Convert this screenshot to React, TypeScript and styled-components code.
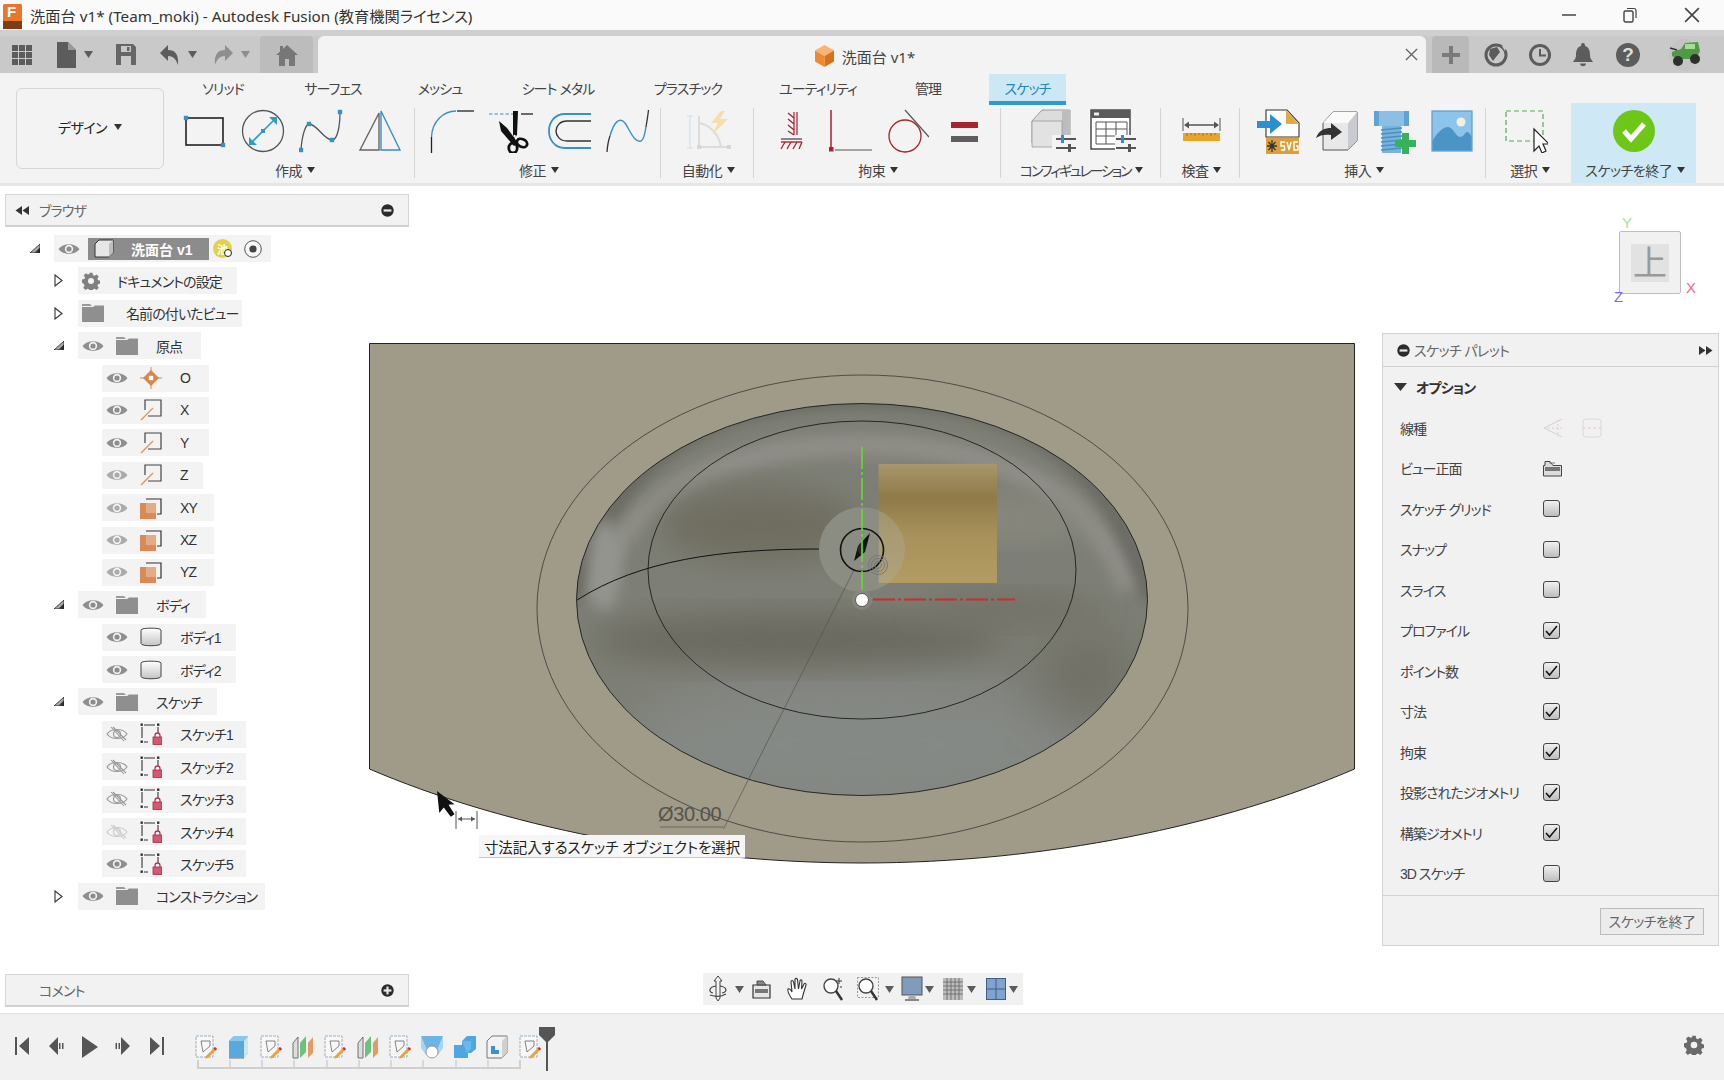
import React from "react";
import styled, { createGlobalStyle } from "styled-components";

const GlobalStyle = createGlobalStyle`
  html, body { margin: 0; padding: 0; background: #fff; overflow: hidden; }
  * { box-sizing: border-box; }
  body {
    font-family: "Liberation Sans", "Noto Sans CJK JP", sans-serif;
    font-feature-settings: "palt";
    color: #333;
  }
`;

const Page = styled.div`
  width: 1724px;
  height: 1080px;
  display: flex;
  flex-direction: column;
`;

/* ---------- title bar ---------- */
const TitleBar = styled.div`
  height: 30px;
  flex: none;
  background: #fafafa;
  display: flex;
  align-items: center;
  padding-left: 3px;
`;
const TitleText = styled.span`
  margin-left: 8px;
  font-family: "Noto Sans", "Noto Sans CJK JP", sans-serif;
  font-size: 15.25px;
  color: #333;
`;
const WindowButtons = styled.div`
  margin-left: auto;
  display: flex;
  align-items: center;
  gap: 47px;
  padding-right: 24px;
`;

/* ---------- tab bar ---------- */
const TabBar = styled.div`
  height: 43px;
  flex: none;
  padding-top: 6px;
  background: linear-gradient(#cfcfcf 0 6px, #c9c9c9 6px);
  display: flex;
`;
const Qat = styled.div`
  width: 260px;
  flex: none;
  display: flex;
  align-items: center;
  padding-left: 12px;
`;
const QatItem = styled.div<{ $ml?: number }>`
  display: flex;
  margin-left: ${(p) => p.$ml ?? 0}px;
`;
const HomeTab = styled.div`
  width: 53px;
  flex: none;
  margin-right: 5px;
  background: #bcbcbc;
  border-radius: 4px 4px 0 0;
  display: flex;
  align-items: center;
  justify-content: center;
`;
const DocTab = styled.div`
  width: 1108px;
  flex: none;
  background: #f3f3f3;
  border-radius: 6px 6px 0 0;
  display: grid;
  grid-template-columns: 1fr auto 1fr;
  align-items: center;
`;
const DocTitle = styled.div`
  grid-column: 2;
  display: flex;
  align-items: center;
  gap: 8px;
  padding: 3px 14px 0 0;
  font-family: "Noto Sans", "Noto Sans CJK JP", sans-serif;
  font-size: 15px;
  color: #444;
`;
const DocClose = styled.div`
  grid-column: 3;
  justify-self: end;
  display: flex;
  margin-right: 8px;
`;
const PlusTab = styled.div`
  width: 37px;
  flex: none;
  margin-left: 6px;
  background: #b9b9b9;
  border-radius: 4px 4px 0 0;
  display: flex;
  align-items: center;
  justify-content: center;
`;
const TopRight = styled.div`
  display: flex;
  align-items: center;
  padding-left: 15px;
`;

/* ---------- ribbon ---------- */
const Ribbon = styled.div`
  height: 113px;
  flex: none;
  background: #f3f3f3;
  border-bottom: 3px solid #e6e6e6;
  display: flex;
`;
const DesignColumn = styled.div`
  width: 173px;
  flex: none;
  padding: 15px 0 0 16px;
`;
const DesignButton = styled.div`
  width: 148px;
  height: 81px;
  border: 1px solid #d6d6d6;
  border-radius: 6px;
  display: flex;
  align-items: center;
  justify-content: center;
  gap: 7px;
  padding-bottom: 3px;
  font-size: 14px;
  letter-spacing: -0.6px;
  color: #222;
`;
const RibbonMain = styled.div`
  display: flex;
  flex-direction: column;
`;
const TabsRow = styled.div`
  height: 32px;
  flex: none;
  display: flex;
  padding-top: 1px;
`;
const RibbonTab = styled.div<{ $w: number; $active?: boolean; $ml?: number }>`
  width: ${(p) => p.$w}px;
  margin-left: ${(p) => p.$ml ?? 0}px;
  display: flex;
  align-items: center;
  justify-content: center;
  font-size: 14px;
  letter-spacing: -0.9px;
  color: ${(p) => (p.$active ? "#2585b5" : "#444")};
  background: ${(p) => (p.$active ? "#cde8f5" : "transparent")};
  border-bottom: 4px solid ${(p) => (p.$active ? "#2f9bc8" : "transparent")};
`;
const GroupsRow = styled.div`
  display: flex;
  flex: 1;
`;
const Group = styled.div<{ $w: number }>`
  width: ${(p) => p.$w}px;
  flex: none;
  display: flex;
  flex-direction: column;
`;
const IconRow = styled.div<{ $pad: number; $gap?: number }>`
  height: 49px;
  flex: none;
  display: flex;
  align-items: flex-start;
  padding: 4px 0 0 ${(p) => p.$pad}px;
  gap: ${(p) => p.$gap ?? 0}px;
`;
const GroupLabel = styled.div<{ $tight?: boolean }>`
  display: flex;
  align-items: center;
  justify-content: center;
  gap: 5px;
  height: 29px;
  padding: 3px 0 0 3px;
  font-size: 14px;
  letter-spacing: ${(p) => (p.$tight ? -2.1 : -0.5)}px;
  color: #444;
  white-space: nowrap;
`;
const GroupDivider = styled.div`
  width: 1px;
  flex: none;
  margin: 3px 0 5px;
  background: #d4d4d4;
`;
const FinishGroup = styled.div`
  width: 125.5px;
  flex: none;
  margin-top: -2px;
  background: #cfe8f5;
  display: flex;
  flex-direction: column;
`;
const FinishIcon = styled.div`
  height: 51px;
  flex: none;
  display: flex;
  justify-content: center;
  padding-top: 7px;
`;
const Caret = styled.span`
  width: 0;
  height: 0;
  border-left: 4px solid transparent;
  border-right: 4px solid transparent;
  border-top: 6px solid #333;
`;

/* ---------- workspace ---------- */
const Workspace = styled.div`
  flex: 1;
  display: flex;
  min-height: 0;
  background: #fff;
`;
const LeftColumn = styled.div`
  width: 365px;
  flex: none;
  position: relative;
  z-index: 1;
  padding: 8px 0 6px 5px;
  display: flex;
  flex-direction: column;
`;
const PanelBar = styled.div`
  width: 404px;
  height: 33px;
  flex: none;
  background: #f2f2f2;
  border: 1px solid #d6d6d6;
  border-bottom: 2px solid #cfcfcf;
  display: flex;
  align-items: center;
  padding: 0 14px 0 9px;
  font-size: 14px;
  letter-spacing: -0.8px;
  color: #666;
`;
const BarTitle = styled.span<{ $ml: number }>`
  margin-left: ${(p) => p.$ml}px;
  flex: 1;
`;
const Tree = styled.div`
  flex: 1;
  padding-top: 8px;
  display: flex;
  flex-direction: column;
  gap: 5.4px;
`;
const TreeRow = styled.div<{ $level: number }>`
  height: 27px;
  flex: none;
  display: flex;
  align-items: center;
  padding-left: ${(p) => 25 + p.$level * 24}px;
`;
const Twisty = styled.div`
  width: 24px;
  flex: none;
  display: flex;
`;
const Pill = styled.div<{ $w: number }>`
  width: ${(p) => p.$w}px;
  height: 27px;
  background: #f3f3f3;
  display: flex;
  align-items: center;
  padding-left: 4px;
  gap: 12px;
`;
const TreeLabel = styled.span<{ $ml?: number }>`
  margin-left: ${(p) => p.$ml ?? 6}px;
  font-size: 14px;
  letter-spacing: -0.9px;
  color: #333;
  white-space: nowrap;
`;
const RootName = styled.div`
  width: 121px;
  height: 22px;
  margin-left: -4px;
  background: #8c8c8c;
  display: flex;
  align-items: center;
  padding-left: 6px;
  color: #fff;
  font-size: 14px;
  font-weight: 700;
`;
const RootNameText = styled.span`
  margin-left: 17px;
`;
const UserBadge = styled.div`
  width: 19px;
  height: 19px;
  margin-left: -8px;
  position: relative;
  border-radius: 50%;
  background: #e2d14a;
  color: #fff;
  font-size: 11px;
  font-weight: 700;
  display: flex;
  align-items: center;
  justify-content: center;
  &::after {
    content: "";
    position: absolute;
    right: 0;
    bottom: 1px;
    width: 6px;
    height: 6px;
    border-radius: 50%;
    background: #fff;
    border: 1px solid #222;
  }
`;

const CanvasColumn = styled.div`
  width: 1017px;
  flex: none;
  position: relative;
`;
const SketchView = styled.svg`
  display: block;
  width: 1017px;
  height: 827px;
`;
const DimensionText = styled.div`
  position: absolute;
  left: 293px;
  top: 617px;
  font-size: 20px;
  color: #55544c;
  letter-spacing: -0.4px;
`;
const HintBubble = styled.div`
  position: absolute;
  left: 114px;
  top: 649px;
  width: 266px;
  height: 23px;
  background: #f6f6f6;
  border-bottom: 1px solid #c8c8c8;
  display: flex;
  align-items: center;
  justify-content: center;
  font-size: 14.5px;
  letter-spacing: -0.1px;
  color: #222;
  white-space: nowrap;
`;
const NavBar = styled.div`
  position: absolute;
  left: 338px;
  top: 787px;
  width: 320px;
  height: 32px;
  background: #f1f1f1;
  display: flex;
  align-items: center;
`;
const NavItem = styled.div<{ $ml?: number }>`
  display: flex;
  margin-left: ${(p) => p.$ml ?? 0}px;
`;

const RightColumn = styled.div`
  flex: 1;
  padding-top: 45px;
`;
const ViewCube = styled.div`
  position: relative;
  width: 62px;
  height: 63px;
  margin-left: 237px;
  background: #f1f1f1;
  border: 1px solid #bdbdbd;
  border-radius: 2px;
  display: flex;
  align-items: center;
  justify-content: center;
`;
const CubeFace = styled.div`
  width: 38px;
  height: 38px;
  background: #e2e2e2;
  display: flex;
  align-items: center;
  justify-content: center;
  color: #999;
  font-size: 34px;
  line-height: 1;
`;
const AxisLetter = styled.span<{ $x: number; $y: number; $c: string }>`
  position: absolute;
  left: ${(p) => p.$x}px;
  top: ${(p) => p.$y}px;
  color: ${(p) => p.$c};
  font-size: 15px;
  line-height: 1;
`;
const Palette = styled.div`
  width: 337px;
  margin-top: 39px;
  background: #f1f1f1;
  border: 1px solid #d2d2d2;
  display: flex;
  flex-direction: column;
`;
const PaletteHeader = styled.div`
  height: 33px;
  flex: none;
  display: flex;
  align-items: center;
  padding: 0 5px 0 14px;
  border-bottom: 1px solid #d2d2d2;
  font-size: 14px;
  letter-spacing: -0.6px;
  color: #666;
`;
const PaletteRow = styled.div`
  height: 40.5px;
  flex: none;
  display: flex;
  align-items: center;
  padding-left: 17px;
`;
const OptionHead = styled(PaletteRow)`
  padding-left: 11px;
  gap: 9px;
  font-size: 14px;
  letter-spacing: -0.8px;
  font-weight: 700;
  color: #333;
`;
const RowLabel = styled.span`
  width: 143px;
  flex: none;
  font-size: 14px;
  letter-spacing: -1px;
  color: #444;
  white-space: nowrap;
`;
const CheckBox = styled.div<{ $on?: boolean }>`
  width: 17px;
  height: 17px;
  border: 1.5px solid #444;
  border-radius: 3px;
  background: linear-gradient(#f0f0f0, #bdbdbd);
  display: flex;
  align-items: center;
  justify-content: center;
`;
const PaletteGap = styled.span`
  width: 16px;
`;
const PaletteFooter = styled.div`
  height: 50px;
  margin-top: 1px;
  border-top: 1px solid #d2d2d2;
  display: flex;
  justify-content: flex-end;
  padding: 12px 14px 0 0;
`;
const FinishButton = styled.div`
  width: 104px;
  height: 27px;
  border: 1px solid #bbb;
  background: #ececec;
  display: flex;
  align-items: center;
  justify-content: center;
  font-size: 14px;
  letter-spacing: -0.5px;
  color: #666;
`;

/* ---------- timeline ---------- */
const Timeline = styled.div`
  height: 67px;
  flex: none;
  position: relative;
  background: #f1f1f1;
  border-top: 1px solid #e3e3e3;
  display: flex;
  align-items: flex-start;
  padding: 21px 20px 0 12px;
`;
const PlayControls = styled.div`
  display: flex;
  gap: 13.7px;
  height: 24px;
  align-items: center;
`;
const FeatureColumn = styled.div`
  margin-left: 27px;
  display: flex;
  flex-direction: column;
`;
const FeatureRow = styled.div`
  display: flex;
  gap: 8.4px;
`;
const Marker = styled.svg`
  position: absolute;
  left: 538px;
  top: 13px;
`;
const GearSlot = styled.div`
  margin-left: auto;
  display: flex;
`;

/* ---------- icons ---------- */
const EyeIcon = ({ off, c = "#8e8e8e" }: { off?: boolean; c?: string }) =>
  off ? (
    <svg width="22" height="16" viewBox="0 0 22 16">
      <path d="M1 8C5 2 17 2 21 8C17 14 5 14 1 8Z" fill="none" stroke={c} strokeWidth="1.2" />
      <circle cx="11" cy="8" r="3.5" fill="none" stroke={c} strokeWidth="1.2" />
      <path d="M5 1L18 15M7 1L20 14" stroke={c} strokeWidth="1.1" />
    </svg>
  ) : (
    <svg width="22" height="14" viewBox="0 0 22 14">
      <path d="M0.5 7C5 0.5 17 0.5 21.5 7C17 13.5 5 13.5 0.5 7Z" fill={c} />
      <circle cx="11" cy="7" r="4.2" fill="#f3f3f3" />
      <circle cx="11" cy="7" r="2.6" fill={c} />
    </svg>
  );

const FolderIcon = () => (
  <svg width="22" height="18" viewBox="0 0 22 18">
    <path d="M0 0H8L10 2H0Z" fill="#9a9a9a" />
    <path d="M0 3H11L13 1.5H22V18H0Z" fill="#8f8f8f" />
  </svg>
);

const GearIcon = ({ size = 18, c = "#808080" }: { size?: number; c?: string }) => (
  <svg width={size} height={size} viewBox="0 0 24 24">
    <path
      fill={c}
      fillRule="evenodd"
      d="M10 1h4l.7 3.2 2 .8L19.5 3.3l2.8 2.8-1.7 2.8.8 2 3.2.7v4l-3.2.7-.8 2 1.7 2.8-2.8 2.8-2.8-1.7-2 .8-.7 3.2h-4l-.7-3.2-2-.8-2.8 1.7-2.8-2.8 1.7-2.8-.8-2L0 14v-4l3.2-.7.8-2L2.3 4.5l2.8-2.8L7.9 3.4l2-.8zM12 8a4 4 0 1 0 0 8 4 4 0 0 0 0-8z"
    />
  </svg>
);

const OriginIcon = () => (
  <svg width="22" height="22" viewBox="0 0 22 22">
    <path d="M11 0V22M0 11H22" stroke="#d98a50" strokeWidth="1" />
    <path d="M11 3L19 11L11 19L3 11Z" fill="#d9864a" />
    <rect x="8.8" y="8.8" width="4.4" height="4.4" fill="#fff" />
  </svg>
);

const AxisIcon = () => (
  <svg width="22" height="22" viewBox="0 0 22 22">
    <path d="M5 11V1H21V17H8" fill="none" stroke="#444" strokeWidth="1.2" />
    <path d="M1 21L13 9" stroke="#d8925f" strokeWidth="1.3" />
  </svg>
);

const PlaneIcon = () => (
  <svg width="22" height="22" viewBox="0 0 22 22">
    <path d="M6 2H21V17H17" fill="none" stroke="#333" strokeWidth="1.2" />
    <rect x="0" y="6" width="16" height="16" fill="#dc8a55" />
    <rect x="6" y="6" width="10" height="10" fill="#e3ab87" />
  </svg>
);

const BodyIcon = () => (
  <svg width="22" height="20" viewBox="0 0 22 20">
    <defs>
      <linearGradient id="bodyGrad" x1="0" y1="0" x2="0" y2="1">
        <stop offset="0" stopColor="#fff" />
        <stop offset="1" stopColor="#c4c4c4" />
      </linearGradient>
    </defs>
    <path
      d="M1 3C1 0.5 21 0.5 21 3V16.5C21 19.5 1 19.5 1 16.5Z"
      fill="url(#bodyGrad)"
      stroke="#444"
      strokeWidth="1"
    />
  </svg>
);

const SketchIcon = () => (
  <svg width="22" height="22" viewBox="0 0 22 22">
    <path d="M4 2H15M2 4V15M4 19H8M18 4V10" fill="none" stroke="#333" strokeWidth="1.1" />
    <g fill="#333">
      <rect x="0.5" y="0.5" width="2.4" height="2.4" />
      <rect x="17" y="0.5" width="2.4" height="2.4" />
      <rect x="0.5" y="17.5" width="2.4" height="2.4" />
    </g>
    <path d="M15 14V12.5a2.5 2.5 0 0 1 5 0V14" fill="none" stroke="#b03a50" strokeWidth="1.3" />
    <rect x="13" y="14" width="9" height="7.5" fill="#d8566f" stroke="#a42c45" strokeWidth="0.8" />
  </svg>
);

const ExpandedTwisty = () => (
  <svg width="10" height="9" viewBox="0 0 10 9">
    <defs>
      <linearGradient id="twGrad" x1="0" y1="0" x2="1" y2="0">
        <stop offset="0" stopColor="#555" />
        <stop offset="1" stopColor="#222" />
      </linearGradient>
    </defs>
    <path d="M0 9L10 0V9Z" fill="#aaa" stroke="#222" strokeWidth="0.8" />
    <path d="M4 9L10 3.5V9Z" fill="url(#twGrad)" />
  </svg>
);
const CollapsedTwisty = () => (
  <svg width="9" height="13" viewBox="0 0 9 13">
    <path d="M1 1L8 6.5L1 12Z" fill="#fff" stroke="#333" strokeWidth="1.1" />
  </svg>
);

const MinusDot = ({ plus }: { plus?: boolean }) => (
  <svg width="13" height="13" viewBox="0 0 13 13">
    <circle cx="6.5" cy="6.5" r="6.2" fill="#2b2b2b" />
    <rect x="2.6" y="5.4" width="7.8" height="2.2" fill="#e9e9e9" />
    {plus && <rect x="5.4" y="2.6" width="2.2" height="7.8" fill="#e9e9e9" />}
  </svg>
);
const DoubleArrow = ({ right }: { right?: boolean }) => (
  <svg width="15" height="9" viewBox="0 0 15 9">
    <path
      d={right ? "M1 0L7.5 4.5L1 9ZM8 0L14.5 4.5L8 9Z" : "M14 0L7.5 4.5L14 9ZM7 0L0.5 4.5L7 9Z"}
      fill="#333"
    />
  </svg>
);

const Blue = "#3a8fc4";
const Handle = ({ x, y }: { x: number; y: number }) => (
  <rect x={x - 2.2} y={y - 2.2} width="4.4" height="4.4" fill={Blue} />
);

const RectTool = () => (
  <svg width="44" height="44" viewBox="0 0 44 44">
    <rect x="4" y="9" width="37" height="27" fill="none" stroke="#222" strokeWidth="1.6" />
    <Handle x={4} y={9} />
    <Handle x={41} y={36} />
  </svg>
);
const CircleTool = () => (
  <svg width="44" height="44" viewBox="0 0 44 44">
    <circle cx="22" cy="22" r="20.5" fill="none" stroke="#555" strokeWidth="1.3" />
    <path d="M10 34L34 10" stroke="#2f9bd0" strokeWidth="1.6" />
    <path d="M28 8H36V16ZM8 28V36H16Z" fill="#2f9bd0" />
    <rect x="20" y="20" width="4" height="4" fill={Blue} />
  </svg>
);
const SplineTool = () => (
  <svg width="44" height="44" viewBox="0 0 44 44">
    <path d="M2 41C3 25 7 15 10 15C18 15 25 31 33 31C39 31 41 15 41 3" fill="none" stroke="#555" strokeWidth="1.3" />
    <Handle x={2} y={41} />
    <Handle x={10} y={15} />
    <Handle x={33} y={31} />
    <Handle x={41} y={3} />
  </svg>
);
const MirrorTool = () => (
  <svg width="44" height="44" viewBox="0 0 44 44">
    <path d="M2 41L21 4V41Z" fill="none" stroke="#666" strokeWidth="1.4" />
    <path d="M23 2L42 41H23Z" fill="none" stroke="#3a8fc4" strokeWidth="1.4" />
  </svg>
);
const FilletTool = () => (
  <svg width="44" height="44" viewBox="0 0 44 44">
    <path d="M1.5 44V28" stroke="#222" strokeWidth="1.3" />
    <path d="M1.5 28C2 12 14 2 26 2" fill="none" stroke={Blue} strokeWidth="1.4" />
    <path d="M27 2H44" stroke="#222" strokeWidth="1.3" />
  </svg>
);
const TrimTool = () => (
  <svg width="44" height="44" viewBox="0 0 44 44">
    <path d="M0 5H24" stroke="#3a8fc4" strokeWidth="1.2" strokeDasharray="3.5 2" />
    <path d="M32 5H44" stroke="#222" strokeWidth="1.3" />
    <path d="M24 2L29 2L28 26L24 30Z" fill="#111" />
    <path d="M10 12L18 19L29 34L25 37L12 22Z" fill="#111" />
    <ellipse cx="24" cy="39" rx="4.2" ry="5" fill="none" stroke="#111" strokeWidth="2.8" />
    <ellipse cx="33" cy="34" rx="5.4" ry="3.8" transform="rotate(25 33 34)" fill="none" stroke="#111" strokeWidth="2.8" />
    <circle cx="25.5" cy="27" r="1.2" fill="#fff" />
  </svg>
);
const OffsetTool = () => (
  <svg width="44" height="44" viewBox="0 0 44 44">
    <path d="M44 5H18C7 5 2 14 2 22C2 30 7 39 18 39H44" fill="none" stroke={Blue} strokeWidth="1.8" />
    <path d="M44 12H20C13 12 9 17 9 22C9 27 13 32 20 32H44" fill="none" stroke="#333" strokeWidth="1.4" />
  </svg>
);
const CurveTool = () => (
  <svg width="44" height="44" viewBox="0 0 44 44">
    <path d="M1 43C1.5 36 2.5 31 4 27" fill="none" stroke="#333" strokeWidth="1.3" />
    <path d="M4 27C8 12 14 8 19 14C24 21 28 34 35 32C38 31 39 24 40 18" fill="none" stroke={Blue} strokeWidth="1.4" />
    <path d="M40 18C41 12 42 6 42.5 1" fill="none" stroke="#333" strokeWidth="1.3" />
  </svg>
);
const AutoTool = () => (
  <svg width="44" height="44" viewBox="0 0 44 44">
    <path d="M3 7V39M0 7H6M0 39H6" stroke="#cfdfe8" strokeWidth="1.2" />
    <path d="M12 7V38H42" fill="none" stroke="#dcdcdc" strokeWidth="2" />
    <path d="M12 14C24 16 32 26 34 38" fill="none" stroke="#dcdcdc" strokeWidth="2" />
    <path d="M34 2L24 14H31L25 26L41 10H33L38 2Z" fill="#f6deaa" />
    <rect x="10" y="36" width="4" height="4" fill="#d6d6d6" />
    <rect x="40" y="36" width="4" height="4" fill="#d6d6d6" />
  </svg>
);
const Crimson = "#a8222f";
const FixTool = () => (
  <svg width="44" height="44" viewBox="0 0 44 44">
    <path d="M24 3V26M27 3V26" stroke={Crimson} strokeWidth="1.2" />
    <path d="M24 9L18 4M24 15L18 10M24 21L18 16M24 26L18 22" stroke={Crimson} strokeWidth="1.3" />
    <rect x="11" y="29" width="21" height="2" fill="#888" />
    <path d="M11 33H32" stroke={Crimson} strokeWidth="1.4" />
    <path d="M15 33L11 40M21 33L17 40M27 33L23 40M32 33L29 40" stroke={Crimson} strokeWidth="1.3" />
  </svg>
);
const PerpTool = () => (
  <svg width="44" height="44" viewBox="0 0 44 44">
    <path d="M3 1V39" stroke={Crimson} strokeWidth="1.5" />
    <rect x="1" y="38" width="4.5" height="4.5" fill={Crimson} />
    <path d="M7 41H44" stroke="#888" strokeWidth="1.5" />
  </svg>
);
const TangentTool = () => (
  <svg width="44" height="44" viewBox="0 0 44 44">
    <circle cx="20" cy="27" r="16" fill="none" stroke={Crimson} strokeWidth="1.3" />
    <path d="M20 1L44 28" stroke="#555" strokeWidth="1.2" />
  </svg>
);
const EqualTool = () => (
  <svg width="44" height="44" viewBox="0 0 44 44">
    <rect x="8" y="13" width="27" height="6" fill={Crimson} />
    <rect x="8" y="27" width="27" height="6" fill="#5e5e5e" />
  </svg>
);
const Slider = ({ x, y }: { x: number; y: number }) => (
  <g>
    <path d={`M${x} ${y}H${x + 20}M${x} ${y + 9}H${x + 20}`} stroke="#555" strokeWidth="2" />
    <rect x={x + 5} y={y - 4} width="3" height="8" fill="#2f8fc8" />
    <rect x={x + 12} y={y + 5} width="3" height="8" fill="#555" />
  </g>
);
const ConfigCube = () => (
  <svg width="48" height="46" viewBox="0 0 48 46">
    <path d="M2 12L12 1H40V34H2Z" fill="#dcdcdc" stroke="#888" strokeWidth="0.8" />
    <path d="M32 1L40 1V34H32Z" fill="#bdbdbd" />
    <path d="M2 12H32V38H2Z" fill="#e2e2e2" stroke="#999" strokeWidth="0.8" />
    <rect x="22" y="26" width="26" height="18" fill="#f3f3f3" />
    <Slider x={26} y={30} />
  </svg>
);
const ConfigTable = () => (
  <svg width="48" height="46" viewBox="0 0 48 46">
    <rect x="1" y="1" width="39" height="39" fill="#fff" stroke="#333" strokeWidth="1.3" />
    <rect x="1" y="1" width="39" height="8" fill="#5a5a5a" />
    <rect x="4" y="3.5" width="5" height="3" fill="#eee" />
    <path d="M6 13H37V35H6ZM6 20H37M6 27H37M16 13V35M26 13V35" fill="none" stroke="#555" strokeWidth="1" />
    <rect x="25" y="26" width="23" height="19" fill="#f3f3f3" />
    <Slider x={26} y={30} />
  </svg>
);
const MeasureTool = () => (
  <svg width="44" height="44" viewBox="0 0 44 44">
    <path d="M3 9V22M40 9V22" stroke="#555" strokeWidth="1" />
    <path d="M5 16H38" stroke="#555" strokeWidth="1.3" />
    <path d="M4 16L9 12.5V19.5ZM39 16L34 12.5V19.5Z" fill="#555" />
    <rect x="3" y="24" width="37" height="8" fill="#e6a62a" />
    <path d="M7 24V27M11 24V26M15 24V27M19 24V26M23 24V27M27 24V26M31 24V27M35 24V26" stroke="#8a6412" strokeWidth="0.8" />
  </svg>
);
const SvgInsert = () => (
  <svg width="46" height="46" viewBox="0 0 46 46">
    <path d="M9 1H30L42 14V28H9Z" fill="#fff" stroke="#333" strokeWidth="1.1" />
    <path d="M29 1L42 15H29Z" fill="#e3ab3f" />
    <path d="M0 12H13V5L25 15L13 25V19H0Z" fill="#2b8fd0" />
    <rect x="9" y="29" width="33" height="16" fill="#d9a03b" />
    <path d="M15 31V43M10 37H20M11.5 33L18.5 41M18.5 33L11.5 41" stroke="#333" strokeWidth="1.3" />
    <path d="M28 33H24V37H27.5V41H24M30 33L32 41L34 33M41 33H37V41H41V37H39" fill="none" stroke="#fff" strokeWidth="1.4" />
  </svg>
);
const InsertBox = () => (
  <svg width="44" height="44" viewBox="0 0 44 44">
    <path d="M8 14L18 3H42V32L33 41H8Z" fill="#e8e8e8" stroke="#555" strokeWidth="1" />
    <path d="M33 14L42 3V32L33 41Z" fill="#c9c9d0" />
    <path d="M8 14L18 3H42L33 14Z" fill="#fafafa" />
    <path d="M1 29C4 21 10 19 16 19V14L27 23L16 31V26C10 25 5 26 1 29Z" fill="#333" />
  </svg>
);
const BoltAdd = () => (
  <svg width="46" height="46" viewBox="0 0 46 46">
    <path d="M2 2H37V17H2Z" fill="#5ea3d4" />
    <path d="M7 2H32V17H7Z" fill="#8bbfe3" />
    <rect x="10" y="17" width="19" height="27" fill="#79b3dd" />
    <path d="M9 21L30 19M9 25L30 23M9 29L30 27M9 33L30 31M9 37L30 35M9 41L30 39" stroke="#4a8fc0" strokeWidth="1.4" />
    <path d="M30 24H37V31H44V38H37V45H30V38H23V31H30Z" fill="#35b25a" />
  </svg>
);
const ImageTool = () => (
  <svg width="44" height="44" viewBox="0 0 44 44">
    <rect x="2" y="2" width="40" height="40" fill="#8cc4ec" stroke="#5e9ccb" strokeWidth="1.2" />
    <circle cx="31" cy="13" r="4.5" fill="#f5f0d8" />
    <path d="M2.5 32C8 22 14 18 18 18C23 18 26 28 30 28C34 28 35 23 37 23C39 23 41 26 41.5 28V41.5H2.5Z" fill="#4b94c6" />
  </svg>
);
const SelectTool = () => (
  <svg width="44" height="44" viewBox="0 0 44 44">
    <rect x="2" y="2" width="37" height="30" fill="none" stroke="#5aa85a" strokeWidth="1.2" strokeDasharray="5 3" />
    <path d="M30 20V42L35 37L38 44L42 42L39 35H45Z" fill="#fff" stroke="#222" strokeWidth="1.2" />
  </svg>
);
const FinishCheck = () => (
  <svg width="42" height="42" viewBox="0 0 42 42">
    <circle cx="21" cy="21" r="21" fill="#6cc717" />
    <path d="M11 21L18 29L31 14" fill="none" stroke="#fff" strokeWidth="5" />
  </svg>
);

const GridMenu = () => (
  <svg width="20" height="20" viewBox="0 0 20 20" fill="#5c5c5c">
    {[0, 7, 14].map((y) =>
      [0, 7, 14].map((x) => <rect key={`${x}-${y}`} x={x} y={y} width="6" height="6" />)
    )}
  </svg>
);
const FileIcon = () => (
  <svg width="19" height="26" viewBox="0 0 19 26">
    <path d="M0 0H11L19 8V26H0Z" fill="#5c5c5c" />
    <path d="M11 0L19 8H11Z" fill="#9a9a9a" />
  </svg>
);
const SaveIcon = () => (
  <svg width="20" height="21" viewBox="0 0 20 21">
    <path fillRule="evenodd" fill="#666" d="M0 0H17L20 3V21H0ZM5 2V8H15V2ZM5 12V21H15V12Z" />
    <rect x="11" y="3" width="2.5" height="4" fill="#666" />
  </svg>
);
const UndoIcon = ({ c = "#5c5c5c", flip }: { c?: string; flip?: boolean }) => (
  <svg width="20" height="20" viewBox="0 0 20 20" style={flip ? { transform: "scaleX(-1)" } : undefined}>
    <path d="M8 0V5C15 5 19 9 18 20C16 14 13 11 8 11V16L0 8Z" fill={c} />
  </svg>
);
const DownTri = ({ c = "#5c5c5c" }: { c?: string }) => (
  <svg width="9" height="7" viewBox="0 0 9 7">
    <path d="M0 0H9L4.5 7Z" fill={c} />
  </svg>
);
const HomeIcon = () => (
  <svg width="22" height="22" viewBox="0 0 22 22">
    <path d="M11 1L22 11H19V22H13V15H9V22H3V11H0L4 7.5V2H7V5Z" fill="#777" />
  </svg>
);
const CubeLogo = () => (
  <svg width="19" height="22" viewBox="0 0 19 22">
    <path d="M9.5 0L19 5.5L9.5 11L0 5.5Z" fill="#f9b373" />
    <path d="M0 5.5L9.5 11V22L0 16.5Z" fill="#ee8a32" />
    <path d="M19 5.5L9.5 11V22L19 16.5Z" fill="#d8711c" />
  </svg>
);
const AppLogo = () => (
  <svg width="19" height="25" viewBox="0 0 19 25">
    <rect width="19" height="25" rx="1.5" fill="#e8772e" />
    <rect y="17" width="19" height="8" fill="#7d3d16" />
  </svg>
);
const AppLogoWrap = styled.div`
  position: relative;
  display: flex;
  margin-top: 2px;
`;
const AppLogoLetter = styled.span`
  position: absolute;
  left: 4px;
  top: -1px;
  color: #fff;
  font-size: 15px;
  font-weight: 700;
`;
const XMark = ({ size = 14, c = "#444" }: { size?: number; c?: string }) => (
  <svg width={size} height={size} viewBox="0 0 14 14">
    <path d="M1 1L13 13M13 1L1 13" stroke={c} strokeWidth="1.4" />
  </svg>
);
const MinIcon = () => (
  <svg width="14" height="14" viewBox="0 0 14 14">
    <path d="M0 7H14" stroke="#444" strokeWidth="1.5" />
  </svg>
);
const RestoreIcon = () => (
  <svg width="14" height="16" viewBox="0 0 14 16">
    <rect x="1" y="4" width="9" height="11" rx="1.5" fill="none" stroke="#444" strokeWidth="1.4" />
    <path d="M4 1.5H11A2 2 0 0 1 13 3.5V11" fill="none" stroke="#444" strokeWidth="1.2" />
  </svg>
);
const PlusMark = () => (
  <svg width="18" height="18" viewBox="0 0 18 18">
    <path d="M7 0H11V7H18V11H11V18H7V11H0V7H7Z" fill="#7a7a7a" />
  </svg>
);
const RefreshGlobe = () => (
  <svg width="24" height="24" viewBox="0 0 24 24">
    <circle cx="12" cy="12" r="10" fill="none" stroke="#5c5c5c" strokeWidth="3" />
    <path d="M6 6L13 4L16 9L12 14L9 18L5 12Z" fill="#5c5c5c" />
    <path d="M18 3L23 2L21 8Z" fill="#c9c9c9" />
  </svg>
);
const ClockIcon = () => (
  <svg width="24" height="24" viewBox="0 0 24 24">
    <circle cx="12" cy="12" r="11" fill="#5c5c5c" />
    <circle cx="12" cy="12" r="8" fill="#c9c9c9" />
    <path d="M12 6V12.5H18" fill="none" stroke="#5c5c5c" strokeWidth="2" />
  </svg>
);
const BellIcon = () => (
  <svg width="22" height="24" viewBox="0 0 22 24">
    <path d="M11 0C13 0 13 2 13 3C17 4 18 8 18 12C18 16 20 17 21 19H1C2 17 4 16 4 12C4 8 5 4 9 3C9 2 9 0 11 0Z" fill="#5c5c5c" />
    <path d="M8 20.5H14C14 24 8 24 8 20.5Z" fill="#5c5c5c" />
  </svg>
);
const HelpGlyph = styled.div`
  width: 24px;
  height: 24px;
  border-radius: 50%;
  background: #5c5c5c;
  color: #dedede;
  font-size: 19px;
  font-weight: 700;
  display: flex;
  align-items: center;
  justify-content: center;
`;
const AvatarIcon = () => (
  <svg width="34" height="34" viewBox="0 0 34 34">
    <circle cx="17" cy="17" r="16" fill="#c4c4c4" />
    <path d="M4 14L13 11L17 5L30 4L32 13L28 21H9L4 18Z" fill="#4f9a45" />
    <rect x="17" y="6" width="10" height="5" fill="#a6dc97" />
    <path d="M2 10L9 12" stroke="#333" strokeWidth="1.5" />
    <circle cx="10" cy="23" r="5" fill="#2f2f2f" />
    <circle cx="27" cy="21" r="5" fill="#2f2f2f" />
  </svg>
);
const ViewIcon = () => (
  <svg width="19" height="17" viewBox="0 0 19 17">
    <path d="M0.5 5.5V16H18.5V5.5H10L7 1.5H2V5.5Z" fill="#dcdcdc" stroke="#444" strokeWidth="1" />
    <rect x="2" y="7" width="15" height="4" fill="#777" />
    <path d="M6 3H12" stroke="#777" strokeWidth="1" />
  </svg>
);
const LineTypeA = () => (
  <svg width="22" height="22" viewBox="0 0 22 22">
    <path d="M1 11L19 2M1 11L19 20" stroke="#d0d0d0" strokeWidth="1" />
    <path d="M5 11H21M15 3V19" stroke="#e3c9c4" strokeWidth="1" strokeDasharray="2 2" />
  </svg>
);
const LineTypeB = () => (
  <svg width="22" height="22" viewBox="0 0 22 22">
    <path d="M5 2H17Q20 2 20 5V17Q20 20 17 20H5Q2 20 2 17V5Q2 2 5 2Z" fill="none" stroke="#d8d8d8" strokeWidth="1" />
    <path d="M2 11H20" stroke="#e8c9c4" strokeWidth="1" strokeDasharray="3 2" />
  </svg>
);
const TickMark = () => (
  <svg width="13" height="11" viewBox="0 0 13 11">
    <path d="M1 6L4.5 10L12 1" fill="none" stroke="#111" strokeWidth="1.5" />
  </svg>
);
const TriDown = () => (
  <svg width="13" height="8" viewBox="0 0 13 8">
    <path d="M0 0H13L6.5 8Z" fill="#333" />
  </svg>
);

/* nav bar */
const OrbitIcon = () => (
  <svg width="22" height="26" viewBox="0 0 22 26">
    <path d="M11 0L15 5H13V22L11 25L9 22V5H7Z" fill="#f3f3f3" stroke="#444" strokeWidth="1" />
    <path d="M9 10C2 11 1 16 6 17M13 10C20 11 21 16 15 17" fill="none" stroke="#444" strokeWidth="1.2" />
    <path d="M3 19C9 21 14 21 19 18" fill="none" stroke="#444" strokeWidth="1.2" />
  </svg>
);
const ClipIcon = () => (
  <svg width="19" height="19" viewBox="0 0 19 19">
    <path d="M1 5H18V18H1Z" fill="#e6e6e6" stroke="#333" strokeWidth="1.2" />
    <path d="M5 1H11L14 5H5Z" fill="#888" stroke="#333" strokeWidth="0.8" />
    <path d="M3 9H16V13H3Z" fill="#777" />
  </svg>
);
const HandIcon = () => (
  <svg width="22" height="24" viewBox="0 0 22 24">
    <path
      d="M6 22C3 18 1 13 2 12C3 11 5 13 6 15L5 5C5 3 7 3 7.5 5L9 12L9 2.5C9 1 11 1 11.5 2.5L12.5 12L14 4C14 2.5 16 2.5 16 4L15.5 12L18 7C19 5.5 20.5 6.5 20 8L17 18L16 22Z"
      fill="#fff"
      stroke="#333"
      strokeWidth="1.1"
    />
  </svg>
);
const ZoomIcon = ({ plus }: { plus?: boolean }) => (
  <svg width="22" height="24" viewBox="0 0 22 24">
    {plus ? (
      <path d="M17 1V7M14 4H20M18 10H20" stroke="#333" strokeWidth="1" />
    ) : (
      <rect x="0.5" y="0.5" width="21" height="20" fill="none" stroke="#999" strokeWidth="1" strokeDasharray="2 1.5" />
    )}
    <circle cx="9" cy="9" r="7" fill="#fff" stroke="#444" strokeWidth="1.4" />
    <path d="M14 14L20 23" stroke="#333" strokeWidth="2.4" />
  </svg>
);
const DisplayIcon = () => (
  <svg width="22" height="26" viewBox="0 0 22 26">
    <rect x="1" y="1" width="20" height="18" fill="#7f9cbb" stroke="#555" strokeWidth="1" />
    <path d="M8 19H14L15 23H7Z" fill="#aaa" />
    <rect x="4" y="23" width="14" height="2" fill="#888" />
  </svg>
);
const GridIcon = () => (
  <svg width="20" height="22" viewBox="0 0 20 22">
    <rect width="20" height="22" fill="#bdbdbd" />
    <path
      d="M4 0V22M8 0V22M12 0V22M16 0V22M0 4H20M0 8H20M0 12H20M0 16H20"
      stroke="#666"
      strokeWidth="0.8"
    />
  </svg>
);
const PanesIcon = () => (
  <svg width="20" height="22" viewBox="0 0 20 22">
    <rect width="20" height="22" fill="#3f5f88" />
    <path d="M1 1H9.5V10.5H1ZM10.5 1H19V10.5H10.5ZM1 11.5H9.5V21H1ZM10.5 11.5H19V21H10.5Z" fill="#7ea3cc" />
  </svg>
);

/* timeline */
const PlayIcon = ({ kind }: { kind: string }) => {
  const c = "#555";
  const d: Record<string, string> = {
    first: "M0 1H2V19H0ZM4 10L14 1V19Z",
    prev: "M0 10L9 1V19ZM10 7H11.5V13H10ZM13 7H14.5V13H13Z",
    play: "M0 0L16 11L0 22Z",
    next: "M14 10L5 1V19ZM4 7H2.5V13H4ZM1 7H-0.5V13H1Z",
    last: "M14 1H12V19H14ZM10 10L0 1V19Z",
  };
  return (
    <svg width="20" height="22" viewBox="-3 0 20 22">
      <path d={d[kind]} fill={c} />
    </svg>
  );
};

const FeatureIcon = ({ kind }: { kind: string }) => {
  if (kind === "sketch")
    return (
      <svg width="24" height="24" viewBox="0 0 24 24">
        <rect x="2" y="1" width="17" height="21" fill="#f7f7f7" stroke="#8fa8bd" strokeWidth="0.9" strokeDasharray="3 1" />
        <path d="M7 6H16V11L9 17Z" fill="none" stroke="#666" strokeWidth="0.8" />
        <path d="M21 12L23 14L14 23L11 23.5L12 21Z" fill="#e8a33f" />
        <path d="M21 12L23 14L21.5 15.5L19.5 13.5Z" fill="#cf2f2f" />
      </svg>
    );
  if (kind === "extrude")
    return (
      <svg width="24" height="24" viewBox="0 0 24 24">
        <path d="M3 6L8 1H22V18L18 23H3Z" fill="#5aa9dd" />
        <path d="M18 6L22 1V18L18 23Z" fill="#cfe3f1" />
        <path d="M3 6L8 1H22L18 6Z" fill="#8cc6ea" />
        <path d="M3 23H18" stroke="#999" strokeWidth="1.5" />
      </svg>
    );
  if (kind === "split")
    return (
      <svg width="24" height="24" viewBox="0 0 24 24">
        <path d="M2 8L7 2V23H2Z" fill="#ddd" stroke="#555" strokeWidth="0.8" />
        <path d="M9 8L15 1V17L9 23Z" fill="#6cc47c" />
        <path d="M17 8L22 2V18L17 23Z" fill="#e49a63" />
      </svg>
    );
  if (kind === "hole")
    return (
      <svg width="24" height="24" viewBox="0 0 24 24">
        <path d="M1 1H23L18 14H6Z" fill="#6bb4e6" />
        <path d="M1 1V13L6 20V14ZM23 1V13L18 20V14Z" fill="#a9d3ee" />
        <circle cx="12" cy="17" r="6" fill="#fff" stroke="#999" strokeWidth="1" />
      </svg>
    );
  if (kind === "join")
    return (
      <svg width="24" height="24" viewBox="0 0 24 24">
        <path d="M9 6L14 1H23V14L18 18H15V23H1V10H9Z" fill="#4ea6e2" />
        <path d="M9 6H18V14L14 18" fill="#6ab8ec" />
      </svg>
    );
  return (
    <svg width="24" height="24" viewBox="0 0 24 24">
      <path d="M2 6L7 1H22V18L17 23H2Z" fill="#f2f2f2" stroke="#777" strokeWidth="1" />
      <path d="M17 6L22 1V18L17 23Z" fill="#cfcfcf" />
      <path d="M6 11H10V15H14V19H6Z" fill="#3f90cc" />
    </svg>
  );
};

const BodyCubeIcon = () => (
  <svg width="20" height="19" viewBox="0 0 20 19">
    <path d="M1 5L5 1H19V14L15 18H1Z" fill="#e6e6e6" stroke="#333" strokeWidth="1" />
    <path d="M15 5L19 1V14L15 18Z" fill="#bdbdbd" />
  </svg>
);

const RecordIcon = () => (
  <svg width="18" height="18" viewBox="0 0 18 18">
    <circle cx="9" cy="9" r="8.3" fill="#f8f8f8" stroke="#555" strokeWidth="1" />
    <circle cx="9" cy="9" r="3.6" fill="#444" />
  </svg>
);

const RailSvg = styled.svg`
  margin: 1px 0 0 3px;
`;
const TimelineRail = () => (
  <RailSvg width="324" height="10" viewBox="0 0 324 10">
    <path d="M1 0V8H323V0" fill="none" stroke="#cfcfcf" strokeWidth="2" />
    {[33, 65, 97, 130, 162, 194, 226, 259, 291].map((x) => (
      <path key={x} d={`M${x} 0V8`} stroke="#cfcfcf" strokeWidth="1.5" />
    ))}
  </RailSvg>
);

/* ---------- data ---------- */
const tabs = [
  { t: "ソリッド", w: 100 },
  { t: "サーフェス", w: 120 },
  { t: "メッシュ", w: 94 },
  { t: "シート メタル", w: 142 },
  { t: "プラスチック", w: 118 },
  { t: "ユーティリティ", w: 142 },
  { t: "管理", w: 78 },
];

type Row = {
  level: number;
  twisty?: "open" | "closed";
  w: number;
  label: string;
  icon: React.ReactNode;
  eye?: "on" | "dim" | "off" | "offdim" | "none";
  ml?: number;
};

const rows: Row[] = [
  { level: 1, twisty: "closed", w: 159, label: "ドキュメントの設定", icon: <GearIcon />, eye: "none", ml: 5 },
  { level: 1, twisty: "closed", w: 164, label: "名前の付いたビュー", icon: <FolderIcon />, eye: "none", ml: 10 },
  { level: 1, twisty: "open", w: 123, label: "原点", icon: <FolderIcon /> },
  { level: 2, w: 107, label: "O", icon: <OriginIcon /> },
  { level: 2, w: 107, label: "X", icon: <AxisIcon /> },
  { level: 2, w: 107, label: "Y", icon: <AxisIcon /> },
  { level: 2, w: 101, label: "Z", icon: <AxisIcon />, eye: "dim" },
  { level: 2, w: 112, label: "XY", icon: <PlaneIcon />, eye: "dim" },
  { level: 2, w: 112, label: "XZ", icon: <PlaneIcon />, eye: "dim" },
  { level: 2, w: 112, label: "YZ", icon: <PlaneIcon />, eye: "dim" },
  { level: 1, twisty: "open", w: 128, label: "ボディ", icon: <FolderIcon /> },
  { level: 2, w: 134, label: "ボディ1", icon: <BodyIcon /> },
  { level: 2, w: 134, label: "ボディ2", icon: <BodyIcon /> },
  { level: 1, twisty: "open", w: 139, label: "スケッチ", icon: <FolderIcon /> },
  { level: 2, w: 144, label: "スケッチ1", icon: <SketchIcon />, eye: "off" },
  { level: 2, w: 144, label: "スケッチ2", icon: <SketchIcon />, eye: "off" },
  { level: 2, w: 144, label: "スケッチ3", icon: <SketchIcon />, eye: "off" },
  { level: 2, w: 144, label: "スケッチ4", icon: <SketchIcon />, eye: "offdim" },
  { level: 2, w: 144, label: "スケッチ5", icon: <SketchIcon /> },
  { level: 1, twisty: "closed", w: 187, label: "コンストラクション", icon: <FolderIcon /> },
];

const paletteRows: { label: string; on?: boolean }[] = [
  { label: "スケッチ グリッド" },
  { label: "スナップ" },
  { label: "スライス" },
  { label: "プロファイル", on: true },
  { label: "ポイント数", on: true },
  { label: "寸法", on: true },
  { label: "拘束", on: true },
  { label: "投影されたジオメトリ", on: true },
  { label: "構築ジオメトリ", on: true },
  { label: "3D スケッチ" },
];

const features = ["sketch", "extrude", "sketch", "split", "sketch", "split", "sketch", "hole", "join", "shell", "sketch"];

const renderEye = (eye: Row["eye"]) => {
  if (eye === "none") return null;
  if (eye === "off") return <EyeIcon off c="#9a9a9a" />;
  if (eye === "offdim") return <EyeIcon off c="#cccccc" />;
  if (eye === "dim") return <EyeIcon c="#ababab" />;
  return <EyeIcon />;
};

const ToolGroup = ({
  w,
  pad,
  gap,
  label,
  tight,
  children,
}: {
  w: number;
  pad: number;
  gap?: number;
  label: string;
  tight?: boolean;
  children: React.ReactNode;
}) => (
  <Group $w={w}>
    <IconRow $pad={pad} $gap={gap}>
      {children}
    </IconRow>
    <GroupLabel $tight={tight}>
      {label}
      <Caret />
    </GroupLabel>
  </Group>
);

/* the sketch drawn on the canvas, in page coordinates */
const SinkDrawing = () => (
  <SketchView viewBox="365 186 1017 827">
    <defs>
      <clipPath id="basinClip">
        <ellipse cx="862" cy="599.5" rx="285.5" ry="196" />
      </clipPath>
      <clipPath id="hubLeft">
        <rect x="815" y="505" width="63.5" height="90" />
      </clipPath>
      <clipPath id="hubRight">
        <rect x="878.5" y="505" width="30" height="90" />
      </clipPath>
      <filter id="blurS" x="-30%" y="-30%" width="160%" height="160%">
        <feGaussianBlur stdDeviation="7" />
      </filter>
      <filter id="blurM" x="-30%" y="-30%" width="160%" height="160%">
        <feGaussianBlur stdDeviation="16" />
      </filter>
      <filter id="blurL" x="-40%" y="-40%" width="180%" height="180%">
        <feGaussianBlur stdDeviation="28" />
      </filter>
      <linearGradient id="padGrad" x1="0" y1="0" x2="0" y2="1">
        <stop offset="0" stopColor="#a8966c" />
        <stop offset="0.28" stopColor="#8f7a48" />
        <stop offset="0.6" stopColor="#a8915a" />
        <stop offset="1" stopColor="#b39c63" />
      </linearGradient>
    </defs>

    <path
      d="M369.5 343.5H1354.5V769C1225 825 1045 863 862 863C680 863 500 825 369.5 769Z"
      fill="#a09a88"
      stroke="#222"
      strokeWidth="1"
    />

    <g clipPath="url(#basinClip)">
      <rect x="570" y="400" width="590" height="400" fill="#7d7e75" />
      <ellipse cx="860" cy="745" rx="240" ry="70" fill="#858985" filter="url(#blurL)" />
      <path
        d="M590 600C630 470 760 445 862 445C980 445 1090 480 1130 590"
        fill="none"
        stroke="#8f8e88"
        strokeWidth="22"
        filter="url(#blurS)"
      />
      <path
        d="M575 600C620 420 760 400 862 400C970 400 1100 420 1150 600"
        fill="none"
        stroke="#66665f"
        strokeWidth="14"
        filter="url(#blurS)"
      />
      <ellipse cx="760" cy="525" rx="100" ry="36" fill="#6f6d61" filter="url(#blurM)" />
      <ellipse cx="800" cy="640" rx="210" ry="26" fill="#6a695e" filter="url(#blurM)" />
      <ellipse cx="1085" cy="675" rx="45" ry="45" fill="#6e6d63" filter="url(#blurL)" />
      <ellipse cx="1010" cy="610" rx="90" ry="16" fill="#727166" filter="url(#blurM)" />
      <ellipse cx="605" cy="565" rx="16" ry="46" fill="#94948f" filter="url(#blurS)" />
      <ellipse cx="1000" cy="520" rx="90" ry="20" fill="#88887f" filter="url(#blurM)" />
    </g>

    <ellipse cx="862" cy="599.5" rx="285.5" ry="196" fill="none" stroke="#1d1d1d" strokeWidth="0.9" />
    <ellipse cx="862.5" cy="608.5" rx="325.5" ry="233.5" fill="none" stroke="#2a2a2a" strokeWidth="0.7" />
    <ellipse cx="862" cy="570" rx="214" ry="149" fill="none" stroke="#1d1d1d" strokeWidth="0.9" />

    <rect x="878.5" y="464" width="118.5" height="119" fill="url(#padGrad)" />
    <ellipse cx="862" cy="549.5" rx="43" ry="42.5" fill="#8c8d82" clipPath="url(#hubLeft)" />
    <ellipse cx="862" cy="549.5" rx="43" ry="42.5" fill="#a9a99c" fillOpacity="0.4" clipPath="url(#hubRight)" />

    <path d="M577 600C640 560 720 549 819 549" fill="none" stroke="#111" strokeWidth="1" />
    <path d="M854 570L723.5 829M660 827H723.5" fill="none" stroke="#55544c" strokeWidth="0.7" />

    <circle cx="862" cy="550" r="21.5" fill="none" stroke="#111" strokeWidth="1.6" />
    <path d="M870 533L865 552L854 561L858 546Z" fill="#111" />
    <ellipse cx="861" cy="549" rx="3" ry="6" fill="#2a2a2a" />
    <g fill="none" stroke="#777" strokeWidth="1">
      <circle cx="878" cy="565" r="3.5" />
      <circle cx="878" cy="565" r="6.5" />
      <circle cx="878" cy="565" r="9.5" />
    </g>

    <path d="M862 447V590" stroke="#5ee02a" strokeWidth="1.6" strokeDasharray="22 3 3 3" />
    <path d="M873 599.6H1015" stroke="#cc2d2d" strokeWidth="2" strokeDasharray="22 3 3 3" />
    <circle cx="862" cy="600" r="10" fill="#8a8a84" fillOpacity="0.7" />
    <circle cx="862" cy="600" r="6.5" fill="#fff" stroke="#444" strokeWidth="0.8" />

    <path d="M437 791V813L442 808L448 818L452 816L447 806L453 806Z" fill="#111" transform="rotate(-6 437 791)" />
    <path d="M456 811V829M477 811V829M458 819H475" stroke="#555" strokeWidth="1" />
    <path d="M458 819L462 816.5V821.5ZM475 819L471 816.5V821.5Z" fill="#555" />
  </SketchView>
);

export default function App() {
  return (
    <Page>
      <GlobalStyle />
      <TitleBar>
        <AppLogoWrap>
          <AppLogo />
          <AppLogoLetter>F</AppLogoLetter>
        </AppLogoWrap>
        <TitleText>洗面台 v1* (Team_moki) - Autodesk Fusion (教育機関ライセンス)</TitleText>
        <WindowButtons>
          <MinIcon />
          <RestoreIcon />
          <XMark size={16} />
        </WindowButtons>
      </TitleBar>

      <TabBar>
        <Qat>
          <QatItem><GridMenu /></QatItem>
          <QatItem $ml={25}><FileIcon /></QatItem>
          <QatItem $ml={8}><DownTri /></QatItem>
          <QatItem $ml={23}><SaveIcon /></QatItem>
          <QatItem $ml={24}><UndoIcon /></QatItem>
          <QatItem $ml={8}><DownTri /></QatItem>
          <QatItem $ml={16}><UndoIcon flip c="#8e8e8e" /></QatItem>
          <QatItem $ml={8}><DownTri c="#8e8e8e" /></QatItem>
        </Qat>
        <HomeTab><HomeIcon /></HomeTab>
        <DocTab>
          <DocTitle>
            <CubeLogo />
            洗面台 v1*
          </DocTitle>
          <DocClose><XMark size={13} c="#666" /></DocClose>
        </DocTab>
        <PlusTab><PlusMark /></PlusTab>
        <TopRight>
          <QatItem><RefreshGlobe /></QatItem>
          <QatItem $ml={20}><ClockIcon /></QatItem>
          <QatItem $ml={20}><BellIcon /></QatItem>
          <QatItem $ml={22}><HelpGlyph>?</HelpGlyph></QatItem>
          <QatItem $ml={28}><AvatarIcon /></QatItem>
        </TopRight>
      </TabBar>

      <Ribbon>
        <DesignColumn>
          <DesignButton>
            デザイン
            <Caret />
          </DesignButton>
        </DesignColumn>
        <RibbonMain>
          <TabsRow>
            {tabs.map((t) => (
              <RibbonTab key={t.t} $w={t.w}>{t.t}</RibbonTab>
            ))}
            <RibbonTab $w={77} $ml={22} $active>スケッチ</RibbonTab>
          </TabsRow>
          <GroupsRow>
            <ToolGroup w={241} pad={9} gap={14.7} label="作成">
              <RectTool /><CircleTool /><SplineTool /><MirrorTool />
            </ToolGroup>
            <GroupDivider />
            <ToolGroup w={245} pad={15} gap={14.7} label="修正">
              <FilletTool /><TrimTool /><OffsetTool /><CurveTool />
            </ToolGroup>
            <GroupDivider />
            <ToolGroup w={92} pad={26} label="自動化">
              <AutoTool />
            </ToolGroup>
            <GroupDivider />
            <ToolGroup w={245.5} pad={16} gap={13.5} label="拘束">
              <FixTool /><PerpTool /><TangentTool /><EqualTool />
            </ToolGroup>
            <GroupDivider />
            <ToolGroup w={159.3} pad={29} gap={12} tight label="コンフィギュレーション">
              <ConfigCube /><ConfigTable />
            </ToolGroup>
            <GroupDivider />
            <ToolGroup w={78.2} pad={19} label="検査">
              <MeasureTool />
            </ToolGroup>
            <GroupDivider />
            <ToolGroup w={245.5} pad={17} gap={12.5} label="挿入">
              <SvgInsert /><InsertBox /><BoltAdd /><ImageTool />
            </ToolGroup>
            <GroupDivider />
            <ToolGroup w={84.5} pad={18} label="選択">
              <SelectTool />
            </ToolGroup>
            <FinishGroup>
              <FinishIcon><FinishCheck /></FinishIcon>
              <GroupLabel>
                スケッチを終了
                <Caret />
              </GroupLabel>
            </FinishGroup>
          </GroupsRow>
        </RibbonMain>
      </Ribbon>

      <Workspace>
        <LeftColumn>
          <PanelBar>
            <DoubleArrow />
            <BarTitle $ml={9}>ブラウザ</BarTitle>
            <MinusDot />
          </PanelBar>
          <Tree>
            <TreeRow $level={0}>
              <Twisty><ExpandedTwisty /></Twisty>
              <Pill $w={217}>
                <EyeIcon />
                <RootName>
                  <BodyCubeIcon />
                  <RootNameText>洗面台 v1</RootNameText>
                </RootName>
                <UserBadge>池</UserBadge>
                <RecordIcon />
              </Pill>
            </TreeRow>
            {rows.map((r) => (
              <TreeRow key={r.label} $level={r.level}>
                <Twisty>
                  {r.twisty === "open" && <ExpandedTwisty />}
                  {r.twisty === "closed" && <CollapsedTwisty />}
                </Twisty>
                <Pill $w={r.w}>
                  {renderEye(r.eye)}
                  {r.icon}
                  <TreeLabel $ml={r.ml}>{r.label}</TreeLabel>
                </Pill>
              </TreeRow>
            ))}
          </Tree>
          <PanelBar>
            <BarTitle $ml={24}>コメント</BarTitle>
            <MinusDot plus />
          </PanelBar>
        </LeftColumn>

        <CanvasColumn>
          <SinkDrawing />
          <DimensionText>Ø30.00</DimensionText>
          <HintBubble>寸法記入するスケッチ オブジェクトを選択</HintBubble>
          <NavBar>
            <NavItem $ml={4}><OrbitIcon /></NavItem>
            <NavItem $ml={6}><DownTri /></NavItem>
            <NavItem $ml={8}><ClipIcon /></NavItem>
            <NavItem $ml={15}><HandIcon /></NavItem>
            <NavItem $ml={14}><ZoomIcon plus /></NavItem>
            <NavItem $ml={13}><ZoomIcon /></NavItem>
            <NavItem $ml={6}><DownTri /></NavItem>
            <NavItem $ml={7}><DisplayIcon /></NavItem>
            <NavItem $ml={2}><DownTri /></NavItem>
            <NavItem $ml={9}><GridIcon /></NavItem>
            <NavItem $ml={4}><DownTri /></NavItem>
            <NavItem $ml={10}><PanesIcon /></NavItem>
            <NavItem $ml={3}><DownTri /></NavItem>
          </NavBar>
        </CanvasColumn>

        <RightColumn>
          <ViewCube>
            <CubeFace>上</CubeFace>
            <AxisLetter $x={2} $y={-17} $c="#9be89b">Y</AxisLetter>
            <AxisLetter $x={66} $y={48} $c="#ec6b7d">X</AxisLetter>
            <AxisLetter $x={-6} $y={57} $c="#7b6fe0">Z</AxisLetter>
          </ViewCube>
          <Palette>
            <PaletteHeader>
              <MinusDot />
              <BarTitle $ml={4}>スケッチ パレット</BarTitle>
              <DoubleArrow right />
            </PaletteHeader>
            <OptionHead>
              <TriDown />
              オプション
            </OptionHead>
            <PaletteRow>
              <RowLabel>線種</RowLabel>
              <LineTypeA />
              <PaletteGap />
              <LineTypeB />
            </PaletteRow>
            <PaletteRow>
              <RowLabel>ビュー正面</RowLabel>
              <ViewIcon />
            </PaletteRow>
            {paletteRows.map((r) => (
              <PaletteRow key={r.label}>
                <RowLabel>{r.label}</RowLabel>
                <CheckBox $on={r.on}>{r.on && <TickMark />}</CheckBox>
              </PaletteRow>
            ))}
            <PaletteFooter>
              <FinishButton>スケッチを終了</FinishButton>
            </PaletteFooter>
          </Palette>
        </RightColumn>
      </Workspace>

      <Timeline>
        <PlayControls>
          {["first", "prev", "play", "next", "last"].map((k) => (
            <PlayIcon key={k} kind={k} />
          ))}
        </PlayControls>
        <FeatureColumn>
          <FeatureRow>
            {features.map((f, i) => (
              <FeatureIcon key={i} kind={f} />
            ))}
          </FeatureRow>
          <TimelineRail />
        </FeatureColumn>
        <GearSlot><GearIcon size={20} c="#6a6a6a" /></GearSlot>
        <Marker width="18" height="44" viewBox="0 0 18 44">
          <path d="M1 0H17V8L9 16L1 8Z" fill="#555" />
          <rect x="8" y="10" width="2" height="34" fill="#555" />
        </Marker>
      </Timeline>
    </Page>
  );
}
